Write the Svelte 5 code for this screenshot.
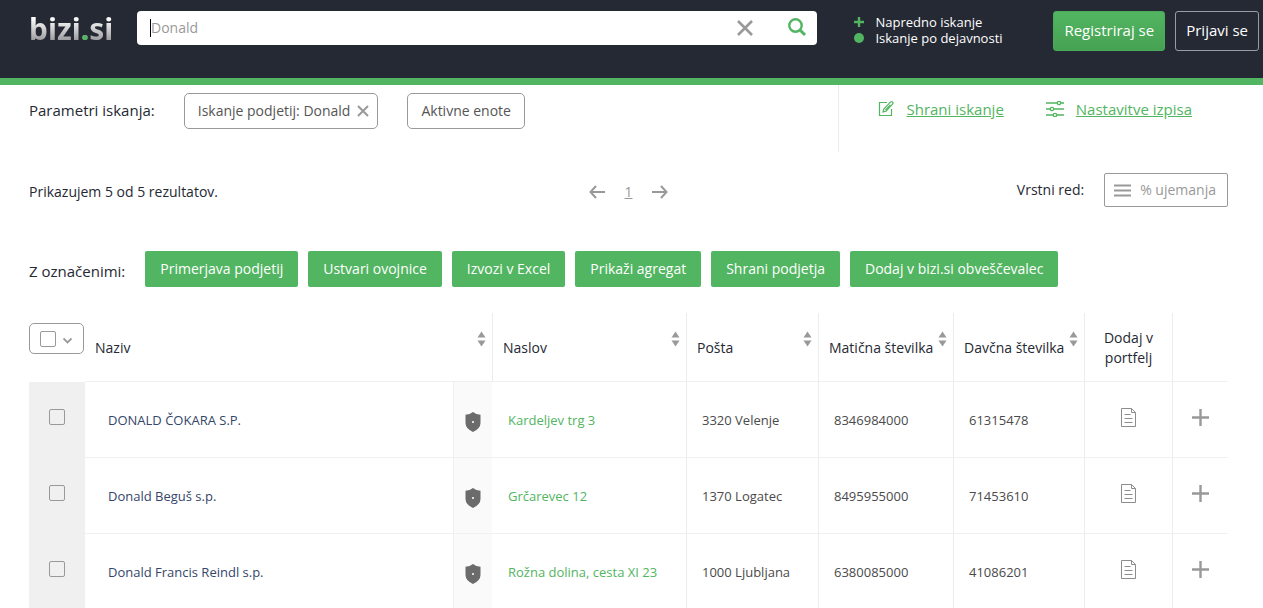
<script lang="ts">
  type Company = {
    name: string;
    address: string;
    post: string;
    regNo: string;
    taxNo: string;
  };

  const actions = [
    "Primerjava podjetij",
    "Ustvari ovojnice",
    "Izvozi v Excel",
    "Prikaži agregat",
    "Shrani podjetja",
    "Dodaj v bizi.si obveščevalec",
  ];

  const columns = ["Naslov", "Pošta", "Matična številka", "Davčna številka"];

  const companies: Company[] = [
    {
      name: "DONALD ČOKARA S.P.",
      address: "Kardeljev trg 3",
      post: "3320 Velenje",
      regNo: "8346984000",
      taxNo: "61315478",
    },
    {
      name: "Donald Beguš s.p.",
      address: "Grčarevec 12",
      post: "1370 Logatec",
      regNo: "8495955000",
      taxNo: "71453610",
    },
    {
      name: "Donald Francis Reindl s.p.",
      address: "Rožna dolina, cesta XI 23",
      post: "1000 Ljubljana",
      regNo: "6380085000",
      taxNo: "41086201",
    },
  ];

  let query = $state("");
  let selected = $state(companies.map(() => false));

  const allSelected = $derived(selected.every(Boolean));

  function toggleAll() {
    const next = !allSelected;
    selected = selected.map(() => next);
  }
</script>

{#snippet sortButton(label: string)}
  <button class="sort" aria-label="Razvrsti: {label}">
    <svg width="9" height="16" viewBox="0 0 9 16" fill="#999">
      <path d="M4.5 0.5 8.5 6.5h-8z" />
      <path d="M4.5 15.5 8.5 9.5h-8z" />
    </svg>
  </button>
{/snippet}

<header>
  <a class="logo" href="#home">bizi<span>.</span>si</a>

  <form class="search" onsubmit={(e) => e.preventDefault()}>
    <span class="caret"></span>
    <input type="text" aria-label="Iskanje" placeholder="Donald" bind:value={query} />
    <button type="button" aria-label="Počisti" onclick={() => (query = "")}>
      <svg width="18" height="18" viewBox="0 0 18 18" fill="none" stroke="#999" stroke-width="2.6">
        <path d="M2 2l14 14M16 2L2 16" />
      </svg>
    </button>
    <button type="submit" aria-label="Išči">
      <svg width="20" height="20" viewBox="0 0 20 20" fill="none" stroke="#52b561" stroke-width="2.4">
        <circle cx="8.5" cy="7.5" r="6.2" />
        <path d="M13 12l5 5" stroke-width="3" />
      </svg>
    </button>
  </form>

  <nav class="modes">
    <a href="#advanced">
      <svg width="10" height="10" viewBox="0 0 10 10" stroke="#52b561" stroke-width="2.4">
        <path d="M5 0v10M0 5h10" />
      </svg>
      Napredno iskanje
    </a>
    <a href="#activity">
      <svg width="10" height="10" viewBox="0 0 10 10" fill="#52b561">
        <circle cx="5" cy="5" r="5" />
      </svg>
      Iskanje po dejavnosti
    </a>
  </nav>

  <div class="account">
    <button class="register">Registriraj se</button>
    <button class="login">Prijavi se</button>
  </div>
</header>

<main>
  <section class="params">
    <div class="filters">
      <span class="params-label">Parametri iskanja:</span>
      <button class="chip">
        Iskanje podjetij: Donald
        <svg width="12" height="12" viewBox="0 0 12 12" stroke="#999" stroke-width="2">
          <path d="M1 1l10 10M11 1L1 11" />
        </svg>
      </button>
      <button class="chip">Aktivne enote</button>
    </div>
    <div class="tools">
      <a href="#save">
        <svg width="16" height="16" viewBox="0 0 16 16" fill="none" stroke="#52b561" stroke-width="1.2">
          <path d="M9 1.5H1.5v13h12V8" />
          <path d="M5 11l.8-3L12.5 1.2q1-1 2 0t0 2L8 10.2z" />
          <path d="M7.5 9l5-5" />
        </svg>
        <span>Shrani iskanje</span>
      </a>
      <a href="#settings">
        <svg width="18" height="16" viewBox="0 0 18 16" fill="none" stroke="#52b561" stroke-width="1.3">
          <path d="M0 2h11M15 2h3M0 8h4M8 8h10M0 14h7M11 14h7" />
          <circle cx="13" cy="2" r="1.7" />
          <circle cx="6" cy="8" r="1.7" />
          <circle cx="9" cy="14" r="1.7" />
        </svg>
        <span>Nastavitve izpisa</span>
      </a>
    </div>
  </section>

  <section class="summary">
    <span class="count">Prikazujem 5 od 5 rezultatov.</span>
    <nav class="pager" aria-label="Strani">
      <a href="#prev" aria-label="Prejšnja">
        <svg width="16" height="14" viewBox="0 0 16 14" fill="none" stroke="#999" stroke-width="2">
          <path d="M16 7H1.5M7 1L1.5 7 7 13" />
        </svg>
      </a>
      <a href="#1">1</a>
      <a href="#next" aria-label="Naslednja">
        <svg width="16" height="14" viewBox="0 0 16 14" fill="none" stroke="#999" stroke-width="2">
          <path d="M0 7h14.5M9 1l5.5 6L9 13" />
        </svg>
      </a>
    </nav>
    <div class="order">
      <span>Vrstni red:</span>
      <button>
        <svg width="17" height="13" viewBox="0 0 17 13" stroke="#999" stroke-width="2">
          <path d="M0 1.5h17M0 6.5h17M0 11.5h17" />
        </svg>
        % ujemanja
      </button>
    </div>
  </section>

  <section class="bulk">
    <span>Z označenimi:</span>
    {#each actions as action (action)}
      <button>{action}</button>
    {/each}
  </section>

  <table>
    <colgroup>
      <col class="c-check" />
      <col />
      <col class="c-shield" />
      <col class="c-address" />
      <col class="c-post" />
      <col class="c-reg" />
      <col class="c-tax" />
      <col class="c-portfolio" />
      <col class="c-more" />
    </colgroup>
    <thead>
      <tr>
        <th class="select-all">
          <div class="select-box">
            <input
              type="checkbox"
              aria-label="Izberi vse"
              checked={allSelected}
              onchange={toggleAll}
            />
            <svg width="9" height="10" viewBox="0 0 9 10" fill="none" stroke="#999" stroke-width="1.8">
              <path d="M0.5 4.500l4 4 4-4" />
            </svg>
          </div>
        </th>
        <th colspan="2">
          <div class="head">Naziv {@render sortButton("Naziv")}</div>
        </th>
        {#each columns as column (column)}
          <th class="line">
            <div class="head">{column} {@render sortButton(column)}</div>
          </th>
        {/each}
        <th class="line center">Dodaj v portfelj</th>
        <th class="line" aria-label="Več"></th>
      </tr>
    </thead>
    <tbody>
      {#each companies as company, i (company.regNo)}
        <tr>
          <td class="check">
            <input type="checkbox" aria-label="Izberi {company.name}" bind:checked={selected[i]} />
          </td>
          <td class="name"><a href="#company">{company.name}</a></td>
          <td class="shield">
            <svg width="16" height="20" viewBox="0 0 16 20">
              <path
                d="M8 0q3 2.6 7.5 2.8V11q0 5.500-7.500 9Q.5 16.500.5 11V2.800Q5 2.600 8 0z"
                fill="#6b6b6b"
              />
              <rect x="7" y="9" width="2" height="2" fill="#ddd" />
            </svg>
          </td>
          <td class="address"><a href="#map">{company.address}</a></td>
          <td class="line">{company.post}</td>
          <td class="line">{company.regNo}</td>
          <td class="line">{company.taxNo}</td>
          <td class="line center">
            <button aria-label="Dodaj v portfelj">
              <svg width="15" height="19" viewBox="0 0 15 19" fill="none" stroke="#8c8c8c">
                <path d="M.5.5h10l4 4v14H.5z" />
                <path d="M10.5.5v4h4M3.5 6.5h6M3.5 10.5h8M3.5 14.5h8" />
              </svg>
            </button>
          </td>
          <td class="line center">
            <button aria-label="Več">
              <svg width="17" height="17" viewBox="0 0 17 17" stroke="#999" stroke-width="2.4">
                <path d="M8.5 0v17M0 8.5h17" />
              </svg>
            </button>
          </td>
        </tr>
      {/each}
    </tbody>
  </table>
</main>

<style>
  :global(body) {
    background: #fff;
    color: #252933;
    font-family: "Open Sans", "Noto Sans", sans-serif;
    font-size: 14px;
    line-height: 20px;
  }

  button,
  input {
    font: inherit;
    color: inherit;
    background: none;
    border: 0;
    margin: 0;
    padding: 0;
  }

  button {
    cursor: pointer;
    white-space: nowrap;
  }

  a {
    color: inherit;
    text-decoration: none;
  }

  svg {
    display: block;
    flex-shrink: 0;
  }

  header {
    display: flex;
    align-items: flex-start;
    box-sizing: border-box;
    height: 85px;
    padding: 11px 4px 0 29px;
    background: #252933;
    border-bottom: 7px solid #52b561;
  }

  .logo {
    width: 108px;
    font-family: "Noto Sans", sans-serif;
    font-size: 30px;
    font-weight: 700;
    line-height: 36px;
    color: transparent;
    background: linear-gradient(#fff 20%, #8e8e92 90%);
    background-clip: text;
  }

  .logo span {
    color: #52b561;
  }

  .search {
    flex: 1;
    display: flex;
    align-items: center;
    height: 34px;
    padding: 0 10px 0 13px;
    background: #fff;
    border-radius: 4px;
  }

  .search .caret {
    width: 1px;
    height: 18px;
    background: #000;
  }

  .search input {
    flex: 1;
    min-width: 0;
    color: #252933;
    outline: none;
  }

  .search input::placeholder {
    color: #999;
    opacity: 1;
  }

  .search button {
    margin-left: 33px;
  }

  .modes {
    width: 199px;
    margin-left: 37px;
    padding-top: 3px;
    font-size: 13px;
    line-height: 16px;
    color: #fff;
  }

  .modes a {
    display: flex;
    align-items: center;
    gap: 11px;
  }

  .account {
    display: flex;
    gap: 10px;
    font-size: 15px;
    color: #fff;
  }

  .account button {
    height: 40px;
    padding: 0 10px 2px;
    border: 1px solid #52b561;
    border-radius: 3px;
  }

  .account .register {
    background: linear-gradient(#52b561, #46a253);
    border-color: #4cab5a;
  }

  .account .login {
    border-color: #9a9ca2;
  }

  main {
    padding: 0 35px 0 29px;
  }

  .params {
    display: flex;
    height: 67px;
    font-size: 15px;
  }

  .filters {
    flex: 1;
    display: flex;
    align-items: flex-start;
    gap: 29px;
    padding-top: 8px;
  }

  .params-label {
    line-height: 34px;
  }

  .chip {
    display: flex;
    align-items: center;
    gap: 7px;
    height: 36px;
    padding: 0 13px;
    font-size: 14px;
    color: #555;
    border: 1px solid #999;
    border-radius: 5px;
  }

  .chip:has(svg) {
    padding-right: 8px;
  }

  .tools {
    display: flex;
    align-items: flex-start;
    gap: 42px;
    padding: 14px 36px 0 39px;
    color: #52b561;
    border-left: 1px solid #ececec;
  }

  .tools a {
    display: flex;
    align-items: center;
    gap: 12px;
  }

  .tools span {
    text-decoration: underline;
  }

  .summary {
    display: grid;
    grid-template-columns: 1fr auto 1fr;
    align-items: center;
    height: 34px;
    margin-top: 21px;
  }

  .count,
  .pager {
    padding-top: 4px;
  }

  .pager {
    display: flex;
    align-items: center;
    gap: 19px;
    color: #999;
  }

  .pager a {
    text-decoration: underline;
  }

  .order {
    display: flex;
    align-items: center;
    justify-content: flex-end;
    gap: 20px;
  }

  .order button {
    display: flex;
    align-items: center;
    gap: 9px;
    height: 34px;
    padding: 0 11px 0 9px;
    color: #999;
    border: 1px solid #999;
    border-radius: 2px;
  }

  .bulk {
    display: flex;
    align-items: center;
    gap: 10px;
    margin-top: 44px;
  }

  .bulk span {
    margin-right: 10px;
    padding-top: 4px;
    font-size: 15px;
  }

  .bulk button {
    height: 36px;
    padding: 0 15px;
    color: #fff;
    background: #52b561;
    border-radius: 2px;
  }

  table {
    width: 100%;
    margin-top: 26px;
    table-layout: fixed;
    border-collapse: separate;
    border-spacing: 0;
  }

  .c-check {
    width: 56px;
  }

  .c-shield {
    width: 39px;
  }

  .c-address {
    width: 194px;
  }

  .c-post {
    width: 132px;
  }

  .c-reg {
    width: 135px;
  }

  .c-tax {
    width: 131px;
  }

  .c-portfolio {
    width: 88px;
  }

  .c-more {
    width: 56px;
  }

  th,
  td {
    box-sizing: border-box;
    border-bottom: 1px solid #f0f0f0;
    text-align: left;
  }

  th {
    height: 69px;
    padding: 2px 6px 0 10px;
    font-weight: 400;
  }

  .line {
    border-left: 1px solid #ececec;
  }

  .head {
    display: flex;
    align-items: center;
    justify-content: space-between;
    white-space: nowrap;
  }

  .sort {
    padding-bottom: 18px;
  }

  th.select-all {
    padding: 10px 0 0;
    vertical-align: top;
    border-bottom: 0;
  }

  .select-box {
    display: flex;
    align-items: center;
    gap: 7px;
    box-sizing: border-box;
    width: 55px;
    height: 31px;
    padding: 0 10px;
    border: 1px solid #999;
    border-radius: 5px;
  }

  input[type="checkbox"] {
    appearance: none;
    box-sizing: border-box;
    flex-shrink: 0;
    width: 16px;
    height: 16px;
    border: 1px solid #999;
    border-radius: 2px;
  }

  input[type="checkbox"]:checked {
    background: #52b561;
  }

  td {
    height: 76px;
    padding: 0 15px;
    font-size: 13px;
    color: #4a4a4a;
  }

  td.check {
    padding: 0 0 5px 20px;
    background: #f0f0f0;
  }

  td.check input {
    display: block;
  }

  td.name {
    padding-left: 23px;
    color: #34466a;
  }

  td.shield {
    padding: 5px 0 0 11px;
    background: #fafafa;
    border-left: 1px solid #f0f0f0;
  }

  td.address {
    padding-left: 16px;
    color: #52b561;
  }

  th.center,
  td.center {
    padding-left: 10px;
    padding-right: 10px;
    text-align: center;
  }

  td.center {
    padding-bottom: 4px;
  }

  td.center button {
    display: block;
    margin: 0 auto;
  }
</style>
